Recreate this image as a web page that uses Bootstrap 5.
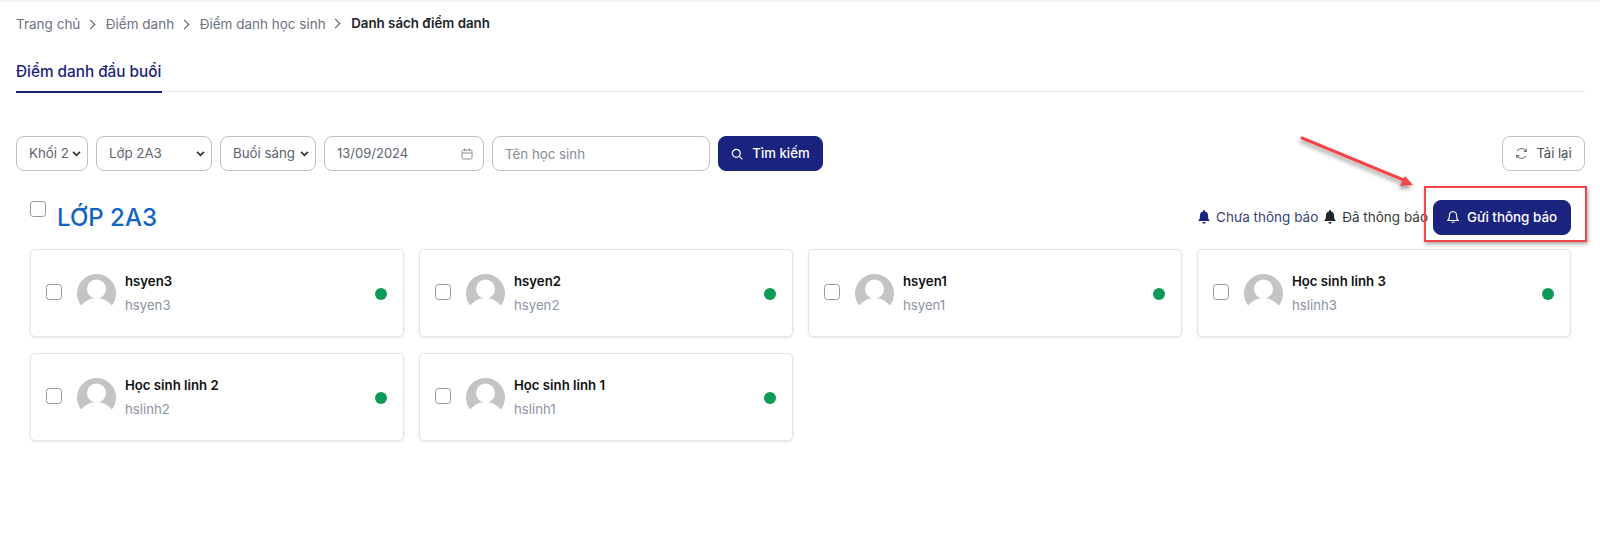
<!DOCTYPE html>
<html lang="vi">
<head>
<meta charset="utf-8">
<title>Danh sách điểm danh</title>
<link href="https://cdn.jsdelivr.net/npm/bootstrap@5.3.0/dist/css/bootstrap.min.css" rel="stylesheet">
<style>
html,body{height:546px;overflow:hidden}
body{font-family:Inter,"Liberation Sans",sans-serif;font-size:13px;color:#212529;background:#fff;position:relative}
.topstrip{height:2px;background:#f3f3f3}
.page-wrap{padding:0 15px 0 16px}
.crumbs{height:44px;margin:0;padding:0;list-style:none;display:flex;align-items:center;color:#6b7280;font-size:13.5px}
.crumbs li+li::before{content:"";display:inline-block;width:7px;height:7px;border-top:1.2px solid #555;border-right:1.2px solid #555;transform:rotate(45deg);margin:0 12px 1px 6.5px}
.crumbs .cur{color:#212529;font-weight:600;font-size:13.3px}
.tabbar{height:46px;border-bottom:1px solid #e4e6ea;display:flex}
.tabitem{padding-top:15px;color:#1a237e;font-weight:500;font-size:15.3px;line-height:1.4;border-bottom:2px solid #1a237e;height:47px;width:146px;white-space:nowrap}
.filters{margin-top:44px;display:flex;gap:8px;align-items:stretch;height:35px}
.filters .form-select,.filters .form-control{font-size:13.3px;color:#5c6470;border-color:#bfc3c8;border-radius:8px;height:35px;min-height:35px;padding:0 0 0 12px}
.filters .form-select{background-image:url("data:image/svg+xml,%3csvg xmlns='http://www.w3.org/2000/svg' viewBox='0 0 10 7'%3e%3cpath fill='none' stroke='%23333' stroke-width='2' d='M1 1l4 4 4-4'/%3e%3c/svg%3e");background-size:9px 6px;background-position:right 6px center;padding-right:18px}
.filters .form-control::placeholder{color:#868e96}
.w-khoi{width:72px!important}.w-lop{width:116px!important}.w-buoi{width:96px!important}.w-name{width:218px!important}
.w-date{width:160px!important;font-size:13px!important;display:flex;align-items:center;justify-content:space-between;padding-right:10px!important}
.navy-btn{background:#1a237e;border:1px solid #1a237e;color:#fff;border-radius:8px;font-size:13.2px;font-weight:500;display:inline-flex;align-items:center;justify-content:center;gap:8px;height:35px;padding:0}
.navy-btn:hover{background:#1a237e;color:#fff}
.w-find{width:105px;gap:9px}
.reload{margin-left:auto;width:83px;height:35px;border:1px solid #bfc3c8;border-radius:8px;background:#fff;color:#495057;font-size:13px;display:inline-flex;align-items:center;justify-content:center;gap:8px;padding:0}
.classhead{height:64px;margin:14px 14px 0 14px;display:flex;align-items:center}
.chk{width:16px;height:16px;border:1px solid #9a9a9a;border-radius:3px;margin:0!important;flex:none;box-shadow:none!important}
.classtitle{font-size:24px;line-height:1;color:#1565c0;font-weight:500;margin:1px 0 0 11px}
.classhead .chk{align-self:flex-start;margin-top:16px!important}
.legend{margin-left:auto;display:flex;align-items:center;gap:6px;font-size:13.5px}
.legend .lg1{color:#3b4374;display:inline-flex;align-items:center;gap:6px}
.legend .lg2{color:#343a40;display:inline-flex;align-items:center;gap:6px}
.w-send{width:138px;font-size:13.4px;margin-left:-1px}
.stud-grid{display:grid;grid-template-columns:repeat(4,374px);gap:16px 15px;margin:0 0 0 14px}
.stud-card{height:88px;border:1px solid #e2e4e7;border-radius:5px;box-shadow:0 1px 3px rgba(0,0,0,.09);display:flex;align-items:center;padding:0 15px;background:#fff}
.stud-card .chk{margin-bottom:2px!important}
.stud-card .avatar{width:39px;height:39px;margin:0 9px 0 15px;flex:none}
.stud-name{font-size:13.2px;font-weight:600;color:#111;line-height:16px}
.stud-sub{font-size:13.2px;color:#8a93a3;line-height:16px;margin-top:8px}
.status-dot{width:12px;height:12px;background:#0b9a58;border-radius:50%;margin:1px 1px 0 auto}
.mark-box{position:absolute;left:1424px;top:186px;width:163px;height:56px;border:2.5px solid #f2474a;box-shadow:1px 2px 4px rgba(0,0,0,.35);pointer-events:none}
.mark-arrow{position:absolute;left:1295px;top:130px;width:130px;height:65px;pointer-events:none;overflow:visible}
</style>
</head>
<body>
<div class="topstrip"></div>
<div class="page-wrap">
  <ul class="crumbs">
    <li>Trang chủ</li><li>Điểm danh</li><li>Điểm danh học sinh</li><li class="cur">Danh sách điểm danh</li>
  </ul>
  <div class="tabbar"><div class="tabitem">Điểm danh đầu buổi</div></div>
  <div class="filters">
    <select class="form-select w-khoi"><option>Khối 2</option></select>
    <select class="form-select w-lop"><option>Lớp 2A3</option></select>
    <select class="form-select w-buoi"><option>Buổi sáng</option></select>
    <div class="form-control w-date"><span>13/09/2024</span>
      <svg width="12" height="12" viewBox="0 0 12 12" fill="none" stroke="#8b9098" stroke-width="1"><rect x="1" y="2" width="10" height="9" rx="1.5"/><path d="M1 5h10M3.5 .5v2.5M8.500 .5v2.500"/></svg>
    </div>
    <input class="form-control w-name" type="text" placeholder="Tên học sinh">
    <button class="btn navy-btn w-find" type="button">
      <svg width="12" height="12" viewBox="0 0 12 12" fill="none" stroke="#fff" stroke-width="1.2"><circle cx="5.300" cy="5.300" r="4"/><path d="M8.300 8.300l3 3"/></svg>Tìm kiếm
    </button>
    <button class="btn reload" type="button">
      <svg width="13" height="13" viewBox="0 0 13 13" fill="none" stroke="#6b7280" stroke-width="1.100"><path d="M11 4.200A5 5 0 0 0 2.300 4M2 8.800A5 5 0 0 0 10.700 9"/><path d="M11.300 1.800v2.700H8.600M1.700 11.200V8.500h2.700"/></svg>Tải lại
    </button>
  </div>
  <div class="classhead">
    <input class="form-check-input chk" type="checkbox" aria-label="Chọn lớp">
    <div class="classtitle">LỚP 2A3</div>
    <div class="legend">
      <span class="lg1"><svg width="12" height="14" viewBox="0 0 12 14" fill="#1a237e"><path d="M6 0a1 1 0 0 1 1 1v.6A4 4 0 0 1 10 5.500c0 3 .6 4.300 2 5.500H0c1.400-1.200 2-2.500 2-5.500A4 4 0 0 1 5 1.600V1a1 1 0 0 1 1-1zM4.300 12h3.400A1.700 1.700 0 0 1 4.300 12z"/></svg>Chưa thông báo</span>
      <span class="lg2"><svg width="12" height="14" viewBox="0 0 12 14" fill="#212529"><path d="M6 0a1 1 0 0 1 1 1v.6A4 4 0 0 1 10 5.500c0 3 .6 4.300 2 5.500H0c1.400-1.200 2-2.500 2-5.500A4 4 0 0 1 5 1.600V1a1 1 0 0 1 1-1zM4.300 12h3.400A1.700 1.700 0 0 1 4.300 12z"/></svg>Đã thông báo</span>
      <button class="btn navy-btn w-send" type="button">
        <svg width="12" height="14" viewBox="0 0 12 14" fill="none" stroke="#fff" stroke-width="1.100"><path d="M6 1.500a3.800 3.800 0 0 1 3.500 4c0 2.600.5 3.900 1.600 5H.9c1.100-1.100 1.600-2.400 1.600-5A3.800 3.800 0 0 1 6 1.500zM4.500 12.300h3"/></svg>Gửi thông báo
      </button>
    </div>
  </div>
  <div class="stud-grid">
    <div class="stud-card"><input class="form-check-input chk" type="checkbox" aria-label="Chọn"><svg class="avatar" viewBox="0 0 39 39"><use href="#av"/></svg><div><div class="stud-name">hsyen3</div><div class="stud-sub">hsyen3</div></div><span class="status-dot"></span></div>
    <div class="stud-card"><input class="form-check-input chk" type="checkbox" aria-label="Chọn"><svg class="avatar" viewBox="0 0 39 39"><use href="#av"/></svg><div><div class="stud-name">hsyen2</div><div class="stud-sub">hsyen2</div></div><span class="status-dot"></span></div>
    <div class="stud-card"><input class="form-check-input chk" type="checkbox" aria-label="Chọn"><svg class="avatar" viewBox="0 0 39 39"><use href="#av"/></svg><div><div class="stud-name">hsyen1</div><div class="stud-sub">hsyen1</div></div><span class="status-dot"></span></div>
    <div class="stud-card"><input class="form-check-input chk" type="checkbox" aria-label="Chọn"><svg class="avatar" viewBox="0 0 39 39"><use href="#av"/></svg><div><div class="stud-name">Học sinh linh 3</div><div class="stud-sub">hslinh3</div></div><span class="status-dot"></span></div>
    <div class="stud-card"><input class="form-check-input chk" type="checkbox" aria-label="Chọn"><svg class="avatar" viewBox="0 0 39 39"><use href="#av"/></svg><div><div class="stud-name">Học sinh linh 2</div><div class="stud-sub">hslinh2</div></div><span class="status-dot"></span></div>
    <div class="stud-card"><input class="form-check-input chk" type="checkbox" aria-label="Chọn"><svg class="avatar" viewBox="0 0 39 39"><use href="#av"/></svg><div><div class="stud-name">Học sinh linh 1</div><div class="stud-sub">hslinh1</div></div><span class="status-dot"></span></div>
  </div>
</div>
<svg width="0" height="0" style="position:absolute"><defs><g id="av"><circle cx="19.500" cy="19.500" r="19.500" fill="#c4c4c4"/><circle cx="19.500" cy="15" r="9.500" fill="#fff"/><path d="M19.500 24C12 24 7 28 3 33v7h33v-7c-4-5-9-9-16.500-9z" fill="#fff"/></g></defs></svg>
<div class="mark-box"></div>
<svg class="mark-arrow" viewBox="0 0 130 65"><defs><filter id="sh" x="-20%" y="-30%" width="140%" height="180%"><feDropShadow dx="-1" dy="3" stdDeviation="2" flood-opacity=".4"/></filter></defs><g filter="url(#sh)" fill="#f2474a"><path d="M7 8l104 43" stroke="#f2474a" stroke-width="3" stroke-linecap="round"/><path d="M118 55L105 56l5-10z"/></g></svg>
<script src="https://cdn.jsdelivr.net/npm/bootstrap@5.3.0/dist/js/bootstrap.bundle.min.js"></script>
</body>
</html>
